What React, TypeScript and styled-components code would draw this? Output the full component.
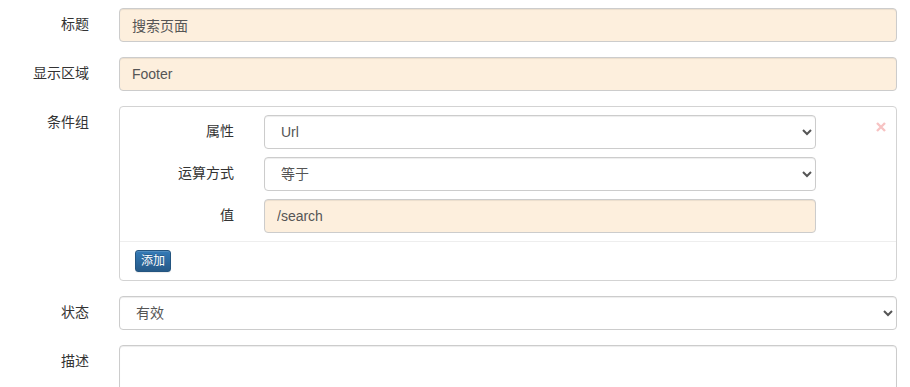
import React from 'react';
import styled, { createGlobalStyle } from 'styled-components';

const GlobalStyle = createGlobalStyle`
  html, body {
    margin: 0;
    padding: 0;
    background: #fff;
  }
  body {
    font-family: "Liberation Sans", "Noto Sans CJK SC", Arial, sans-serif;
    font-size: 14px;
    line-height: 1.42857;
    color: #333;
  }
  * {
    box-sizing: border-box;
  }
`;

const Form = styled.form`
  padding: 8px 13px 0 0;
`;

const FormGroup = styled.div`
  display: grid;
  grid-template-columns: 89px 1fr;
  column-gap: 30px;
  margin-bottom: 15px;
`;

const Label = styled.label`
  padding-top: 7px;
  text-align: right;
  font-weight: 400;
  color: #333;
`;

const controlBase = `
  display: block;
  width: 100%;
  height: 34px;
  padding: 6px 12px;
  font-family: "Liberation Sans", "Noto Sans CJK SC", Arial, sans-serif;
  font-size: 14px;
  line-height: 1.42857;
  color: #555;
  border: 1px solid #ccc;
  border-radius: 4px;
  box-shadow: inset 0 1px 1px rgba(0, 0, 0, 0.075);
  outline: none;
`;

const Input = styled.input<{ $filled?: boolean }>`
  ${controlBase}
  background: ${({ $filled }) => ($filled ? '#fdefdd' : '#fff')};
`;

const Select = styled.select`
  ${controlBase}
  background: #fff;
`;

const TextArea = styled.textarea`
  ${controlBase}
  height: 80px;
  resize: vertical;
  background: #fff;
`;

const Panel = styled.div`
  border: 1px solid #d3d3d3;
  border-radius: 4px;
  background: #fff;
`;

const PanelBody = styled.div`
  display: flex;
  padding: 8px 10px 0 0;
`;

const ConditionRows = styled.div`
  flex: 1;
`;

const ConditionRow = styled.div`
  display: grid;
  grid-template-columns: 114px 552px;
  column-gap: 30px;
  margin-bottom: 8px;
`;

const RemoveButton = styled.button`
  width: 10px;
  height: 10px;
  margin: 7px 0 0 60px;
  padding: 0;
  border: 0;
  background: none;
  cursor: pointer;
  display: flex;
`;

const PanelFooter = styled.div`
  border-top: 1px solid #eee;
  padding: 8px 15px 8px;
`;

const SmallButton = styled.button`
  display: inline-block;
  height: 22px;
  padding: 1px 5px;
  font-family: "Liberation Sans", "Noto Sans CJK SC", Arial, sans-serif;
  font-size: 12px;
  line-height: 1.5;
  color: #fff;
  background-image: linear-gradient(to bottom, #337ab7 0, #265a88 100%);
  border: 1px solid #245580;
  border-radius: 3px;
  text-shadow: 0 -1px 0 rgba(0, 0, 0, 0.2);
  box-shadow: inset 0 1px 0 rgba(255, 255, 255, 0.15), 0 1px 1px rgba(0, 0, 0, 0.075);
`;

const RemoveIcon = () => (
  <svg width="10" height="10" viewBox="0 0 10 10">
    <path d="M1 1 L9 9 M9 1 L1 9" stroke="#f7c3c3" strokeWidth="2.4" strokeLinecap="butt" />
  </svg>
);

export default function App() {
  return (
    <>
      <GlobalStyle />
      <Form onSubmit={e => e.preventDefault()}>
        <FormGroup>
          <Label>标题</Label>
          <Input $filled defaultValue="搜索页面" />
        </FormGroup>

        <FormGroup>
          <Label>显示区域</Label>
          <Input $filled defaultValue="Footer" />
        </FormGroup>

        <FormGroup>
          <Label>条件组</Label>
          <Panel>
            <PanelBody>
              <ConditionRows>
                <ConditionRow>
                  <Label>属性</Label>
                  <Select defaultValue="Url">
                    <option>Url</option>
                  </Select>
                </ConditionRow>
                <ConditionRow>
                  <Label>运算方式</Label>
                  <Select defaultValue="等于">
                    <option>等于</option>
                  </Select>
                </ConditionRow>
                <ConditionRow>
                  <Label>值</Label>
                  <Input $filled defaultValue="/search" />
                </ConditionRow>
              </ConditionRows>
              <RemoveButton type="button" aria-label="删除">
                <RemoveIcon />
              </RemoveButton>
            </PanelBody>
            <PanelFooter>
              <SmallButton type="button">添加</SmallButton>
            </PanelFooter>
          </Panel>
        </FormGroup>

        <FormGroup>
          <Label>状态</Label>
          <Select defaultValue="有效">
            <option>有效</option>
          </Select>
        </FormGroup>

        <FormGroup>
          <Label>描述</Label>
          <TextArea />
        </FormGroup>
      </Form>
    </>
  );
}
